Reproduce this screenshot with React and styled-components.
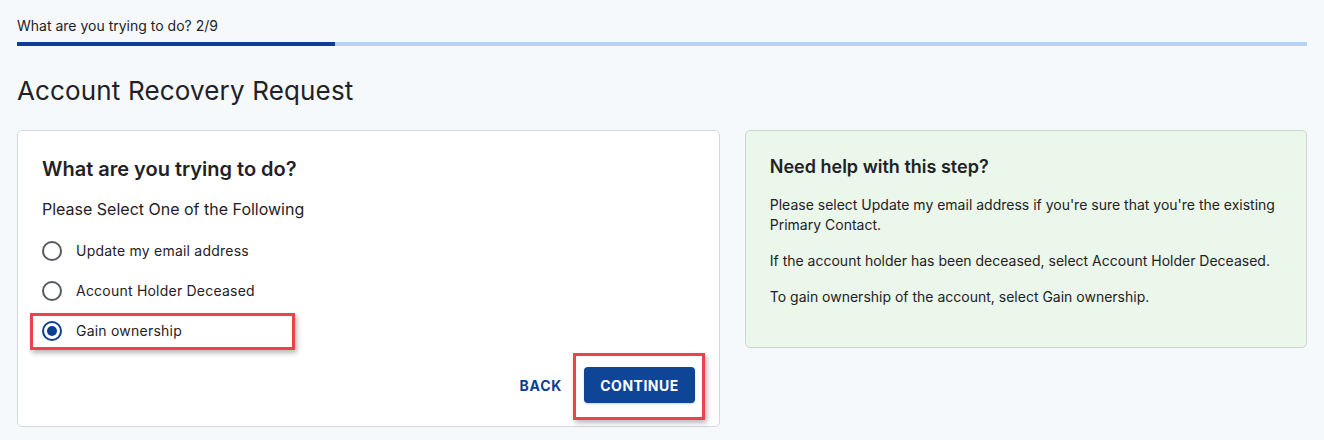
import React, { useState } from "react";
import styled, { createGlobalStyle } from "styled-components";

const Global = createGlobalStyle`
  html, body { margin: 0; padding: 0; background: #f5f9fc; }
  body { font-family: Inter, "Noto Sans", Arial, sans-serif; color: #1f2226; }
  * { box-sizing: border-box; }
`;

const Page = styled.div`
  padding: 16px 17px 0 17px;
  min-height: 440px;
  background: #f5f9fc;
`;

const StepLabel = styled.div`
  font-size: 14px;
  line-height: 20px;
  color: #1f2226;
`;

const Track = styled.div`
  margin-top: 6px;
  height: 4px;
  background: #b8d2f3;
  display: flex;
`;

const Fill = styled.div`
  height: 100%;
  background: #0c3f93;
`;

const Title = styled.h1`
  margin: 27px 0 21px 0;
  font-size: 26px;
  line-height: 36px;
  font-weight: 400;
  letter-spacing: 0.15px;
  color: #1f2226;
`;

const Columns = styled.div`
  display: grid;
  grid-template-columns: 5fr 4fr;
  gap: 25px;
  align-items: start;
`;

const Card = styled.section`
  background: ${(p) => (p.$tint ? "#eaf7ea" : "#ffffff")};
  border: 1px solid ${(p) => (p.$tint ? "#cdd3cd" : "#d3d8df")};
  border-radius: 5px;
  padding: 24px 24px ${(p) => (p.$tint ? "24px" : "23px")} 24px;
`;

const CardTitle = styled.h2`
  margin: 0;
  font-size: ${(p) => (p.$small ? "18px" : "20px")};
  line-height: ${(p) => (p.$small ? "24px" : "28px")};
  font-weight: 600;
  color: #1f2226;
`;

const Prompt = styled.p`
  margin: 16px 0 0 0;
  font-size: 16px;
  line-height: 20px;
`;

const Options = styled.div`
  margin-top: 22px;
  display: flex;
  flex-direction: column;
  gap: 20px;
`;

const Option = styled.label`
  position: relative;
  display: flex;
  align-items: center;
  gap: 14px;
  height: 20px;
  font-size: 14px;
  line-height: 20px;
  letter-spacing: 0.22px;
  cursor: pointer;
  color: #1f2226;
`;

const Radio = styled.span`
  width: 20px;
  height: 20px;
  border-radius: 50%;
  border: 2px solid ${(p) => (p.$checked ? "#0c3f93" : "#555a60")};
  display: flex;
  align-items: center;
  justify-content: center;
  flex: none;
  &::after {
    content: "";
    width: 10px;
    height: 10px;
    border-radius: 50%;
    background: ${(p) => (p.$checked ? "#0c3f93" : "transparent")};
  }
`;

const Highlight = styled.span`
  position: absolute;
  left: ${(p) => p.$l}px;
  top: ${(p) => p.$t}px;
  width: ${(p) => p.$w}px;
  height: ${(p) => p.$h}px;
  border: 3px solid #ea4449;
  box-shadow: 2px 3px 5px rgba(0, 0, 0, 0.28);
  pointer-events: none;
`;

const Actions = styled.div`
  margin-top: 26px;
  display: flex;
  justify-content: flex-end;
  align-items: center;
  gap: 22px;
`;

const TextButton = styled.button`
  background: none;
  border: 0;
  padding: 0;
  font-family: inherit;
  font-size: 14px;
  font-weight: 700;
  letter-spacing: 0.8px;
  color: #0c3f93;
  cursor: pointer;
`;

const ButtonWrap = styled.div`
  position: relative;
`;

const PrimaryButton = styled.button`
  height: 36px;
  padding: 0 16px;
  background: #0e4596;
  border: 0;
  border-radius: 4px;
  color: #fff;
  font-family: inherit;
  font-size: 14px;
  font-weight: 700;
  letter-spacing: 0.5px;
  cursor: pointer;
  box-shadow: 0 1px 2px rgba(0, 0, 0, 0.2);
`;

const HelpText = styled.p`
  margin: 16px 0 0 0;
  font-size: 14px;
  line-height: 20px;
  color: #1f2226;
  &:last-child {
    margin-bottom: 16px;
  }
`;

const options = [
  "Update my email address",
  "Account Holder Deceased",
  "Gain ownership",
];

const step = 2;
const total = 9;

export default function App() {
  const [selected, setSelected] = useState(2);
  return (
    <>
      <Global />
      <Page>
        <StepLabel>
          What are you trying to do? {step}/{total}
        </StepLabel>
        <Track>
          <Fill style={{ width: `${(step / total) * 100 + 2.4}%` }} />
        </Track>
        <Title>Account Recovery Request</Title>
        <Columns>
          <Card>
            <CardTitle>What are you trying to do?</CardTitle>
            <Prompt>Please Select One of the Following</Prompt>
            <Options>
              {options.map((o, i) => (
                <Option key={o} onClick={() => setSelected(i)}>
                  <Radio $checked={selected === i} />
                  {o}
                  {i === 2 && <Highlight $l={-12} $t={-8} $w={265} $h={37} />}
                </Option>
              ))}
            </Options>
            <Actions>
              <TextButton>BACK</TextButton>
              <ButtonWrap>
                <PrimaryButton>CONTINUE</PrimaryButton>
                <Highlight $l={-11} $t={-14} $w={132} $h={67} />
              </ButtonWrap>
            </Actions>
          </Card>
          <Card $tint>
            <CardTitle $small>Need help with this step?</CardTitle>
            <HelpText>
              Please select Update my email address if you're sure that you're the existing Primary Contact.
            </HelpText>
            <HelpText>
              If the account holder has been deceased, select Account Holder Deceased.
            </HelpText>
            <HelpText>To gain ownership of the account, select Gain ownership.</HelpText>
          </Card>
        </Columns>
      </Page>
    </>
  );
}
